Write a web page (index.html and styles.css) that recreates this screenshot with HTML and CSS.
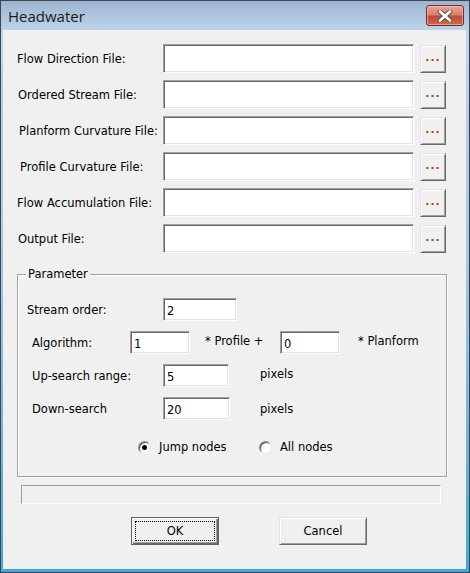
FILE: index.html
```html
<!DOCTYPE html>
<html lang="en">
<head>
    <meta charset="UTF-8">
    <title>Headwater</title>
    <link rel="stylesheet" href="styles.css">
</head>
<body>
    <div class="window">
        <div class="titlebar">
            <span class="title">Headwater</span>
            <button class="close" type="button" aria-label="Close">
                <svg width="18" height="12" viewBox="0 0 18 12">
                    <path d="M4 1.5 L14 10.5 M14 1.5 L4 10.5" stroke="#4a4a4a" stroke-width="4.6" stroke-linecap="round"/>
                    <path d="M4 1.5 L14 10.5 M14 1.5 L4 10.5" stroke="#fff" stroke-width="2.8" stroke-linecap="round"/>
                </svg>
            </button>
        </div>
        <div class="client">
            <div class="files">
                <div class="file-row">
                    <label class="file-label">Flow Direction File:</label>
                    <input class="field file-input" type="text">
                    <button class="browse" type="button">...</button>
                </div>
                <div class="file-row">
                    <label class="file-label shift1">Ordered Stream File:</label>
                    <input class="field file-input" type="text">
                    <button class="browse" type="button">...</button>
                </div>
                <div class="file-row">
                    <label class="file-label shift2">Planform Curvature File:</label>
                    <input class="field file-input" type="text">
                    <button class="browse" type="button">...</button>
                </div>
                <div class="file-row">
                    <label class="file-label shift3">Profile Curvature File:</label>
                    <input class="field file-input" type="text">
                    <button class="browse" type="button">...</button>
                </div>
                <div class="file-row">
                    <label class="file-label">Flow Accumulation File:</label>
                    <input class="field file-input" type="text">
                    <button class="browse" type="button">...</button>
                </div>
                <div class="file-row">
                    <label class="file-label shift1">Output File:</label>
                    <input class="field file-input" type="text">
                    <button class="browse" type="button">...</button>
                </div>
            </div>

            <fieldset class="group">
                <legend>Parameter</legend>
                <div class="p-row first">
                    <span class="p-label stream">Stream order:</span>
                    <input class="field small w74" type="text" value="2">
                </div>
                <div class="p-row">
                    <span class="p-label algo">Algorithm:</span>
                    <input class="field small w60" type="text" value="1">
                    <span class="between">* Profile +</span>
                    <input class="field small w60" type="text" value="0">
                    <span class="after">* Planform</span>
                </div>
                <div class="p-row">
                    <span class="p-label range">Up-search range:</span>
                    <input class="field small w66" type="text" value="5">
                    <span class="unit up">pixels</span>
                </div>
                <div class="p-row">
                    <span class="p-label range">Down-search</span>
                    <input class="field small w67" type="text" value="20">
                    <span class="unit">pixels</span>
                </div>
                <div class="radio-row">
                    <label class="radio first-radio"><span class="dot checked"></span>Jump nodes</label>
                    <label class="radio"><span class="dot"></span>All nodes</label>
                </div>
            </fieldset>

            <div class="progress"></div>

            <div class="actions">
                <button class="push default" type="button"><span class="focus">OK</span></button>
                <button class="push" type="button">Cancel</button>
            </div>
        </div>
    </div>
</body>
</html>
```

FILE: styles.css
```css
body {
    margin: 0;
    padding: 0;
    background: #f0f0f0;
    font-family: "DejaVu Sans", sans-serif;
    font-size: 11.5px;
    color: #000;
}
.window {
    width: 470px;
    height: 573px;
    box-sizing: border-box;
    border: 1px solid #3c4656;
    display: flex;
    flex-direction: column;
    background: linear-gradient(#9db5cf 0, #bcd3ea 29px, #a7c6e4 45%, #3fa9de 100%);
}
.titlebar {
    height: 29px;
    display: flex;
    justify-content: space-between;
    align-items: flex-start;
    flex: none;
}
.title {
    font-family: "Open Sans", sans-serif;
    font-size: 15px;
    color: #1b1b1b;
    padding-left: 7px;
    margin-top: 5px;
}
.close {
    width: 38px;
    height: 21px;
    margin: 4px 5px 0 0;
    padding: 0;
    border: 1px solid #6e2c2a;
    border-radius: 3px;
    background: linear-gradient(#e9a596 0, #d87e6c 45%, #c34a34 55%, #cf6a4c 100%);
    box-shadow: inset 0 0 0 1px rgba(255, 220, 210, 0.5);
    display: flex;
    align-items: center;
    justify-content: center;
}
.client {
    flex: 1;
    margin: 0 3px 3px 2px;
    background: #f0f0f0;
    display: flex;
    flex-direction: column;
}
.files {
    display: flex;
    flex-direction: column;
    gap: 7px;
    padding: 14px 0 0 14px;
}
.file-row {
    display: flex;
    align-items: center;
    height: 29px;
}
.file-label {
    width: 146px;
    flex: none;
}
.shift1 { padding-left: 1px; width: 145px; }
.shift2 { padding-left: 2px; width: 144px; }
.shift3 { padding-left: 3px; width: 143px; }
.field {
    box-sizing: border-box;
    margin: 0;
    padding: 2px 3px 0;
    font: inherit;
    color: #000;
    background: #fff;
    border: 1px solid;
    border-color: #a0a0a0 #fff #fff #a0a0a0;
    box-shadow: inset 1px 1px #696969, inset -1px -1px #e3e3e3;
    outline: none;
}
.file-input {
    width: 251px;
    height: 29px;
}
.browse {
    width: 26px;
    height: 28px;
    margin: 1px 0 0 6px;
    padding: 0 0 4px;
    font: inherit;
    font-size: 11px;
    font-weight: bold;
    color: #a34a00;
    letter-spacing: 1px;
    background: #f0f0f0;
    border: 1px solid;
    border-color: #e3e3e3 #696969 #696969 #e3e3e3;
    box-shadow: inset 1px 1px #fff, inset -1px -1px #a0a0a0;
}
.group {
    margin: 14px 0 0 14px;
    width: 430px;
    box-sizing: border-box;
    padding: 0 0 22px;
    border: 1px solid #a0a0a0;
    box-shadow: inset 1px 1px #fff, 1px 1px #fff;
}
.group legend {
    margin-left: 8px;
    padding: 0 2px;
    background: #f0f0f0;
}
.p-row {
    display: flex;
    align-items: center;
    height: 23px;
    margin-top: 10px;
    padding-left: 14px;
}
.p-row.first {
    margin-top: 17px;
    padding-left: 9px;
}
.p-label { flex: none; }
.p-label.stream { width: 136px; }
.p-label.algo { width: 98px; }
.p-label.range { width: 131px; }
.small { height: 23px; }
.w60 { width: 60px; }
.w66 { width: 66px; }
.w67 { width: 67px; }
.w74 { width: 74px; }
.between {
    width: 75px;
    margin-left: 15px;
    margin-top: -3px;
}
.after {
    margin-left: 18px;
    margin-top: -3px;
}
.unit { margin-left: 30px; }
.unit.up {
    margin-left: 31px;
    margin-top: -4px;
}
.radio-row {
    display: flex;
    align-items: center;
    margin-top: 20px;
    padding-left: 120px;
}
.radio {
    display: flex;
    align-items: center;
    gap: 8px;
}
.first-radio { width: 121px; }
.dot {
    width: 11px;
    height: 11px;
    border-radius: 50%;
    border: 1px solid;
    border-color: #8a8a8a #e8e8e8 #e8e8e8 #8a8a8a;
    box-shadow: inset 1px 1px #505050;
    background: #fff;
    position: relative;
}
.dot.checked::after {
    content: "";
    position: absolute;
    left: 3px;
    top: 3px;
    width: 5px;
    height: 5px;
    border-radius: 50%;
    background: #000;
}
.progress {
    margin: 8px 0 0 18px;
    width: 420px;
    height: 19px;
    box-sizing: border-box;
    border: 1px solid;
    border-color: #a0a0a0 #fff #fff #a0a0a0;
}
.actions {
    display: flex;
    gap: 60px;
    margin: 13px 0 0 128px;
}
.push {
    width: 88px;
    height: 28px;
    padding: 0;
    font: inherit;
    color: #000;
    background: #f0f0f0;
    border: 1px solid;
    border-color: #e3e3e3 #696969 #696969 #e3e3e3;
    box-shadow: inset 1px 1px #fff, inset -1px -1px #a0a0a0;
}
.push.default {
    border: 1px solid #646464;
    box-shadow: inset 1px 1px #fff, inset -1px -1px #696969, inset -2px -2px #a0a0a0;
    padding: 3px;
}
.focus {
    display: flex;
    align-items: center;
    justify-content: center;
    height: 100%;
    box-sizing: border-box;
    border: 1px dotted #000;
}
```
